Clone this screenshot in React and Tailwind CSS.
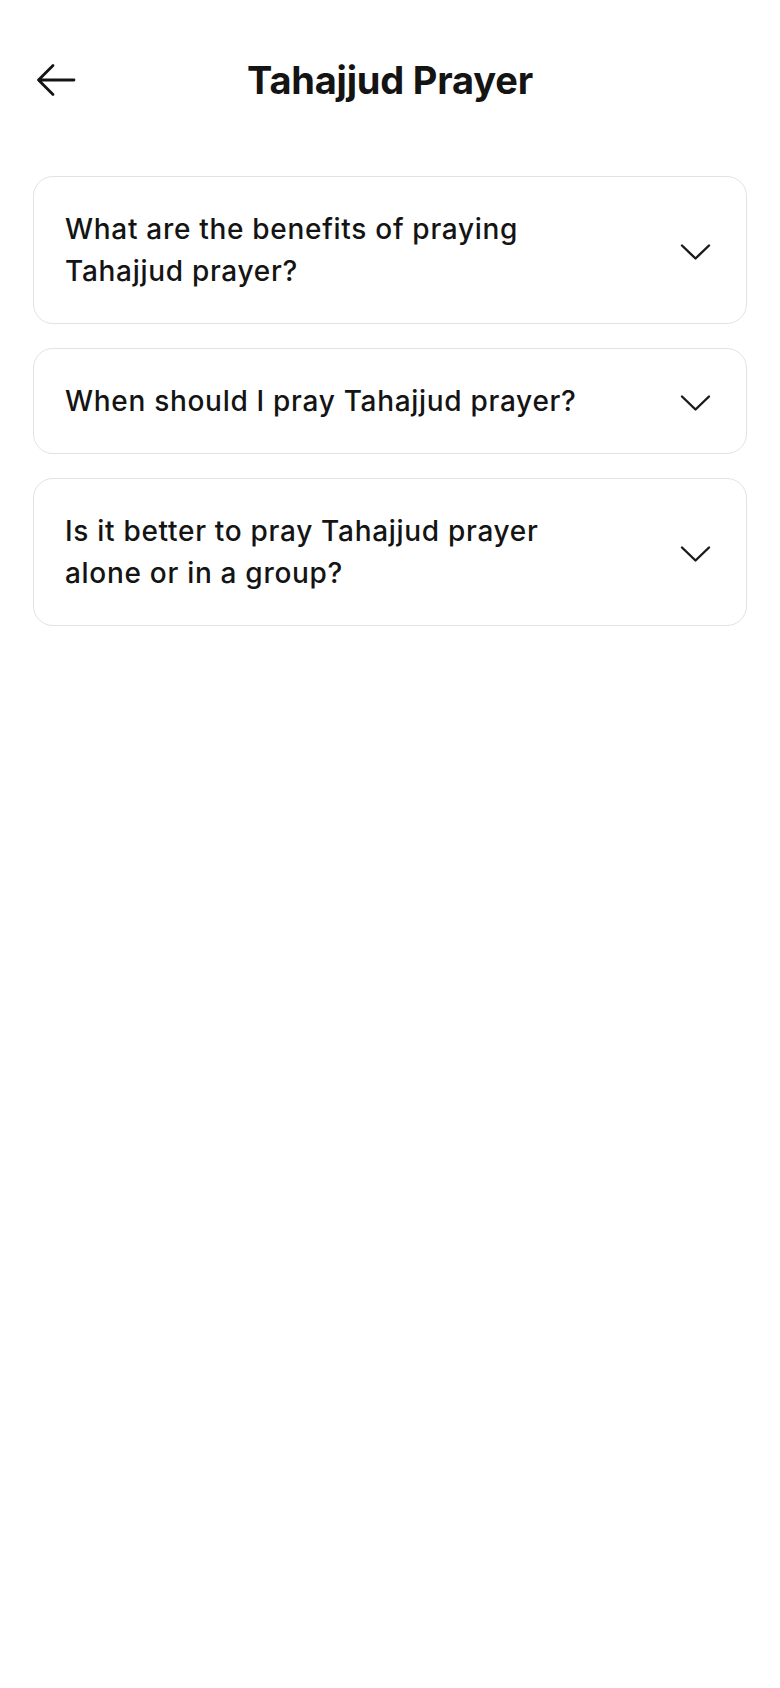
import React from "react";

const questions = [
  "What are the benefits of praying Tahajjud prayer?",
  "When should I pray Tahajjud prayer?",
  "Is it better to pray Tahajjud prayer alone or in a group?",
];

function Chevron() {
  return (
    <svg width="31" height="18" viewBox="0 0 31 18" fill="none" className="shrink-0 mt-[3px]">
      <path d="M2 2.5 L15.5 15.5 L29 2.5" stroke="#1a1a1a" strokeWidth="2.4" strokeLinecap="round" strokeLinejoin="round" />
    </svg>
  );
}

export default function App() {
  return (
    <div className="min-h-[1688px] w-full bg-white text-[#141414]" style={{ fontFamily: "Inter, 'Noto Sans', sans-serif" }}>
      <header className="grid grid-cols-[1fr_auto_1fr] items-center pt-[52px] h-[108px] px-[36px]">
        <button className="flex items-center justify-start">
          <svg width="40" height="40" viewBox="0 0 40 40" fill="none">
            <path d="M38 20 H2.5 M17 5.5 L2.5 20 L17 34.5" stroke="#141414" strokeWidth="2.8" strokeLinecap="round" strokeLinejoin="round" />
          </svg>
        </button>
        <h1 className="text-[38px] font-bold leading-[56px] tracking-[-0.2px]">Tahajjud Prayer</h1>
        <div />
      </header>
      <main className="mt-[68px] px-[33px] flex flex-col gap-[24px]">
        {questions.map((q) => (
          <div key={q} className="flex items-center justify-between rounded-[20px] border border-[#e2e2e2] pl-[31px] pr-[35px] py-[31px]">
            <p className="max-w-[530px] text-[28px] font-medium leading-[42px] tracking-[0.7px]">{q}</p>
            <Chevron />
          </div>
        ))}
      </main>
    </div>
  );
}
